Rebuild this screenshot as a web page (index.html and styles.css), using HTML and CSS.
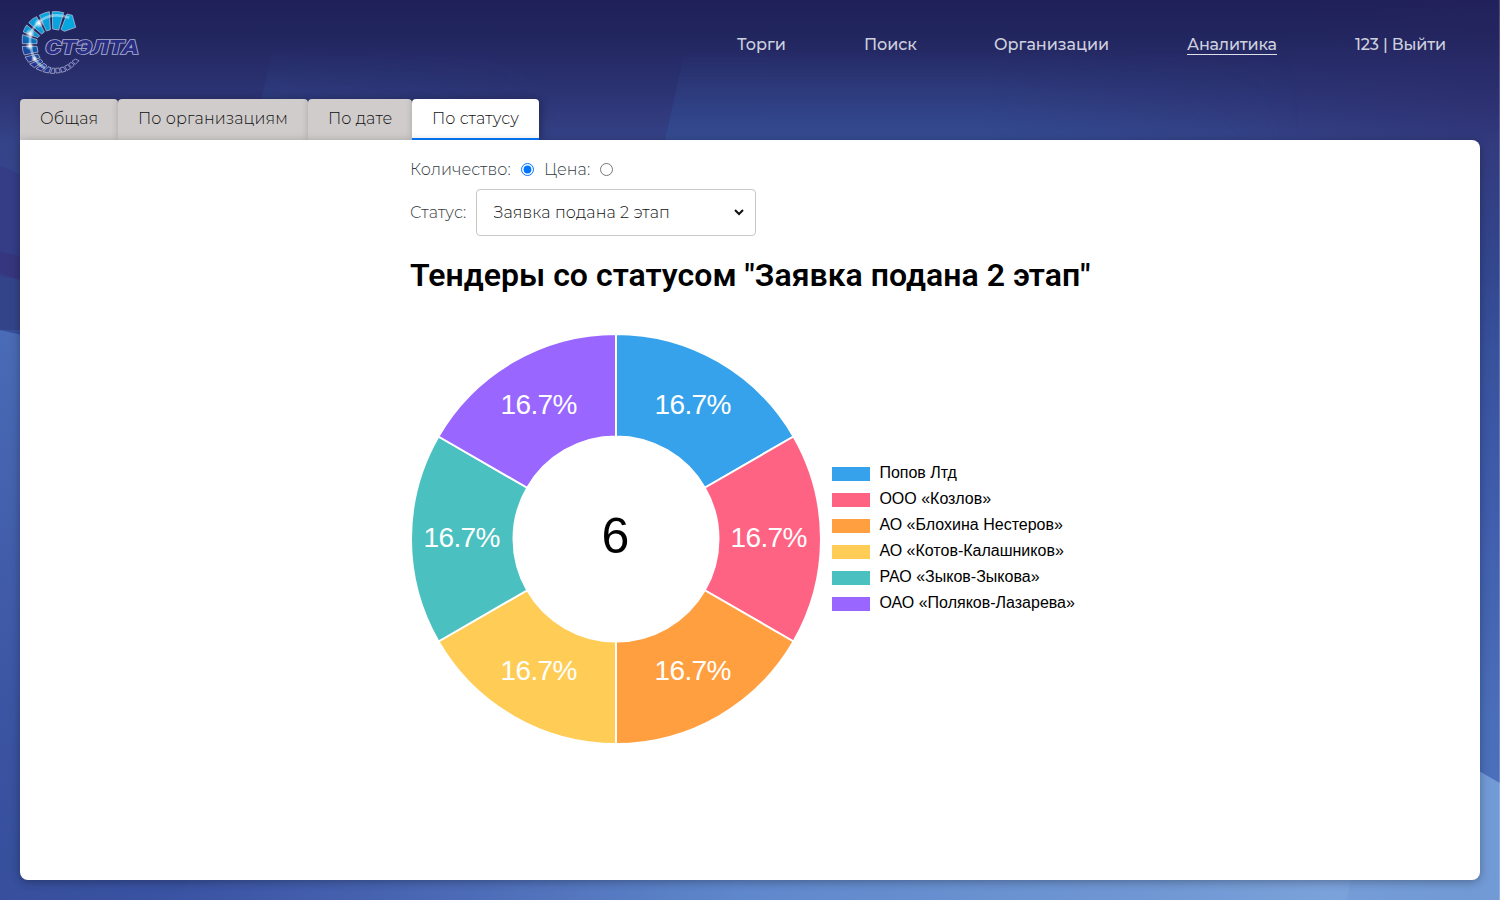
FILE: index.html
```html
<!DOCTYPE html>
<html lang="ru">
<head>
<meta charset="utf-8">
<title>Стэлта — Аналитика</title>
<link rel="stylesheet" href="styles.css">
</head>
<body>
<svg class="backdrop" viewBox="0 0 1500 900" preserveAspectRatio="none" aria-hidden="true">
  <defs>
    <linearGradient id="sky" x1="0" y1="0" x2="0" y2="1">
      <stop offset="0" stop-color="#1f2059"/><stop offset=".04" stop-color="#22265f"/><stop offset=".11" stop-color="#2d3576"/><stop offset=".16" stop-color="#354388"/><stop offset=".3" stop-color="#344b94"/><stop offset=".55" stop-color="#3f5cab"/><stop offset=".8" stop-color="#4b6eba"/><stop offset="1" stop-color="#4d71bd"/>
    </linearGradient>
    <linearGradient id="ray" x1="0" y1="0" x2="0" y2="1"><stop offset="0" stop-color="#3458a0" stop-opacity="0"/><stop offset="1" stop-color="#3458a0" stop-opacity=".45"/></linearGradient>
    <linearGradient id="rayFade" gradientUnits="userSpaceOnUse" x1="660" y1="0" x2="1300" y2="0"><stop offset="0" stop-color="#fff"/><stop offset=".5" stop-color="#fff"/><stop offset="1" stop-color="#000"/></linearGradient>
    <linearGradient id="rayFadeLeft" gradientUnits="userSpaceOnUse" x1="250" y1="0" x2="560" y2="0"><stop offset="0" stop-color="#fff"/><stop offset="1" stop-color="#000"/></linearGradient>
    <mask id="softRay"><rect width="1500" height="200" fill="url(#rayFade)"/></mask>
    <mask id="softRayLeft"><rect width="1500" height="200" fill="url(#rayFadeLeft)"/></mask>
    <linearGradient id="side" x1="0" y1="0" x2="0" y2="1"><stop offset="0" stop-color="#4a6bb6"/><stop offset=".75" stop-color="#3a52a0"/><stop offset="1" stop-color="#364f9b"/></linearGradient>
    <linearGradient id="floor" x1="0" y1="0" x2="1" y2="0"><stop offset="0" stop-color="#374f9c"/><stop offset=".12" stop-color="#3a53a2"/><stop offset=".3" stop-color="#4b69b5"/><stop offset=".5" stop-color="#5f87cb"/><stop offset=".8" stop-color="#7299d4"/><stop offset=".9" stop-color="#7ca2db"/><stop offset="1" stop-color="#739bd6"/></linearGradient>
    <radialGradient id="dusk" gradientUnits="userSpaceOnUse" cx="1500" cy="110" r="240"><stop offset="0" stop-color="#2b2362" stop-opacity=".3"/><stop offset="1" stop-color="#2b2362" stop-opacity="0"/></radialGradient>
  </defs>
  <rect width="1500" height="900" fill="url(#sky)"/>
  <path d="M273 48H700V140H252Z" fill="url(#ray)" opacity=".9" mask="url(#softRayLeft)"/>
  <path d="M685 50H1300V140H665Z" fill="url(#ray)" mask="url(#softRay)"/>
  <rect x="1200" width="300" height="360" fill="url(#dusk)"/>
  <path d="M0 166L20 174V330H0Z" fill="#343d86"/>
  <path d="M0 252L20 256V280L0 273Z" fill="#35367d"/>
  <path d="M0 276L20 280V330H0Z" fill="#344489"/>
  <path d="M0 330L30 337V900H0Z" fill="url(#side)"/>
  <rect y="870" width="1480" height="30" fill="url(#floor)"/>
  <path d="M1352 870H1480V900H1347Z" fill="#6f97d3" opacity=".5"/>
  <path d="M1470 766L1500 783V900H1470Z" fill="#729ad5"/>
  <path d="M1499 0h1v900h-1z" fill="#fff" opacity=".2"/>
</svg>

<div class="page">
  <header class="header">
    <a class="logo" href="#" aria-label="Стэлта">
      <svg width="140" height="84" viewBox="0 0 420 252">
        <defs>
          <linearGradient id="blade" gradientUnits="userSpaceOnUse" x1="160" y1="40" x2="60" y2="215"><stop offset="0" stop-color="#05a9e2"/><stop offset=".45" stop-color="#099bd6"/><stop offset=".65" stop-color="#0b5fae"/><stop offset=".9" stop-color="#27308e"/></linearGradient>
          <radialGradient id="spark"><stop offset="0" stop-color="#fff"/><stop offset="1" stop-color="#fff" stop-opacity="0"/></radialGradient>
        </defs>
        <g fill="url(#blade)" stroke="#bfc1d9" stroke-width="2.2" stroke-linejoin="round">
          <path d="M171 42L187 46L197 82L163 94L153 88Z"/>
          <path d="M127 35Q143 33 161 38L146 90L128 87Z"/>
          <path d="M88 46Q104 37 118 35L121 89L109 93Z"/>
          <path d="M56 68Q68 54 80 50L103 96L95 102Z"/>
          <path d="M40 96Q43 84 50 75L89 107L83 113Z"/>
          <path d="M38 104L81 119L81 131L37 131Q36 112 38 104Z"/>
          <path d="M37 139H81L84 156L43 165Q37 153 37 139Z"/>
          <path d="M45 171L84 162L90 173L56 187Z"/>
          <path d="M59 192L92 178L99 185L73 203Z"/>
          <path d="M78 206L102 190L111 197L94 213Z"/>
          <path d="M99 215L114 200L123 203L116 219Z"/>
        </g>
        <g fill="#272d78" stroke="#aeb0d0" stroke-width="2.3" stroke-linejoin="round">
          <path d="M121 220L127 204L134 205L134 220Z"/><path d="M138 219L137 205L147 204L151 218Z"/><path d="M155 217L151 203L160 201L168 213Z"/><path d="M171 211L164 199L173 194L182 205Z"/><path d="M185 203L176 192L183 187L193 195Z"/><path d="M196 193L186 184L196 177L207 182Z"/>
        </g>
        <path d="M178 53Q128 35 90 63Q52 94 62 140Q70 188 105 204" fill="none" stroke="#d9f5ff" stroke-width="8" opacity=".5"/>
        <circle cx="87" cy="70" r="15" fill="url(#spark)"/><circle cx="60" cy="101" r="15" fill="url(#spark)"/><circle cx="59" cy="138" r="13" fill="url(#spark)"/><circle cx="73" cy="176" r="10" fill="url(#spark)"/>
        <text class="logo-name" x="106" y="162" textLength="281" lengthAdjust="spacingAndGlyphs">СТЭЛТА</text>
      </svg>
    </a>
    <nav class="nav">
      <a class="nav-link n-trade" href="#">Торги</a>
      <a class="nav-link n-search" href="#">Поиск</a>
      <a class="nav-link n-orgs" href="#">Организации</a>
      <a class="nav-link n-stats current" href="#">Аналитика</a>
      <a class="nav-link n-exit" href="#">123 | Выйти</a>
    </nav>
  </header>

  <div class="tabs">
    <button class="tab t-all">Общая</button>
    <button class="tab t-orgs">По организациям</button>
    <button class="tab t-date">По дате</button>
    <button class="tab t-status active">По статусу</button>
  </div>

  <main class="panel">
    <div class="report">
      <div class="mode">
        <label class="l-count" for="count">Количество:</label><input id="count" type="radio" name="mode" checked>
        <label class="l-price" for="price">Цена:</label><input id="price" type="radio" name="mode">
      </div>
      <div class="status">
        <label class="l-status" for="status">Статус:</label>
        <div class="select-box"><select id="status" class="select"><option>Заявка подана 2 этап</option></select></div>
      </div>
      <h1 class="title">Тендеры со статусом "Заявка подана 2 этап"</h1>
      <div class="chart">
        <svg class="donut" width="412" height="412" viewBox="-206 -206 412 412">
          <g stroke="#fff" stroke-width="2" stroke-linejoin="bevel">
            <path fill="#36a2eb" d="M0-205A205 205 0 0 1 177.54-102.5L88.77-51.25A102.5 102.5 0 0 0 0-102.5Z"/>
            <path fill="#ff6384" d="M177.54-102.5A205 205 0 0 1 177.54 102.5L88.77 51.25A102.5 102.5 0 0 0 88.77-51.25Z"/>
            <path fill="#ff9f40" d="M177.54 102.5A205 205 0 0 1 0 205V102.5A102.5 102.5 0 0 0 88.77 51.25Z"/>
            <path fill="#ffcd56" d="M0 205A205 205 0 0 1-177.54 102.5L-88.77 51.25A102.5 102.5 0 0 0 0 102.5Z"/>
            <path fill="#4bc0c0" d="M-177.54 102.5A205 205 0 0 1-177.54-102.5L-88.77-51.25A102.5 102.5 0 0 0-88.77 51.25Z"/>
            <path fill="#9966ff" d="M-177.54-102.5A205 205 0 0 1 0-205V-102.5A102.5 102.5 0 0 0-88.77-51.25Z"/>
          </g>
          <g class="share">
            <text x="76.7" y="-125">16.7%</text><text x="152.7" y="8">16.7%</text><text x="76.7" y="141">16.7%</text>
            <text x="-77.3" y="141">16.7%</text><text x="-154.3" y="8">16.7%</text><text x="-77.3" y="-125">16.7%</text>
          </g>
          <text class="total" x="-.5" y="14">6</text>
        </svg>
        <ul class="legend">
          <li><i class="swatch blue"></i>Попов Лтд</li>
          <li><i class="swatch pink"></i>ООО «Козлов»</li>
          <li><i class="swatch orange"></i>АО «Блохина Нестеров»</li>
          <li><i class="swatch yellow"></i>АО «Котов-Калашников»</li>
          <li><i class="swatch teal"></i>РАО «Зыков-Зыкова»</li>
          <li><i class="swatch violet"></i>ОАО «Поляков-Лазарева»</li>
        </ul>
      </div>
    </div>
  </main>
</div>
</body>
</html>
```
FILE: styles.css
```css
* { box-sizing: border-box; }
body { margin: 0; height: 900px; overflow: hidden; background: #20225b; font-family: Montserrat, Inter, sans-serif; font-size: 16px; }
.backdrop { position: absolute; inset: 0; width: 100%; height: 100%; z-index: -1; }
.page { height: 900px; padding: 0 20px 20px; display: flex; flex-direction: column; }
.header { height: 99px; display: flex; justify-content: space-between; align-items: flex-start; }
.logo { margin-left: -10px; }
.logo svg { display: block; }
.logo-name { font: italic 900 60px Roboto, sans-serif; fill: #292e83; stroke: #aaadd0; stroke-width: 4.5px; paint-order: stroke; }
.nav { display: flex; gap: 78px; padding: 35px 33px 0 0; }
.nav-link { color: #cfd0de; font-weight: 500; line-height: 20px; height: 20px; text-decoration: none; white-space: nowrap; }
.n-trade { width: 49px; }
.n-search { width: 52px; letter-spacing: -.1px; }
.n-orgs { width: 115px; }
.n-stats { width: 90px; letter-spacing: -.2px; }
.n-exit { width: 92px; letter-spacing: -.15px; }
.current { border-bottom: 1px solid #dedfe9; }
.tabs { display: flex; height: 41px; }
.tab { height: 41px; border: 0; border-radius: 4px 4px 0 0; background: #d0cccb; color: #111; font: 300 16px/20px Montserrat, Inter, sans-serif; letter-spacing: .1px; padding: 0 0 2px 20px; text-align: left; white-space: nowrap; box-shadow: 2px 0 8px rgba(0, 0, 0, .3); }
.t-all { width: 98px; }
.t-orgs { width: 190px; }
.t-date { width: 104px; }
.t-status { width: 127px; }
.tab.active { background: #fff; border-bottom: 2px solid #007bff; padding-bottom: 0; }
.panel { position: relative; flex: 1; background: #fff; border-radius: 0 8px 8px 8px; box-shadow: 0 2px 10px rgba(0, 0, 0, .3); display: flex; justify-content: center; }
.report { width: 680px; padding-top: 19px; color: #343b42; font-weight: 300; letter-spacing: .08px; }
.mode { display: flex; align-items: center; height: 21px; }
.mode input { width: 13px; height: 13px; margin: 0 10px; accent-color: #0075ff; }
.l-count { width: 101px; white-space: nowrap; }
.l-price { width: 46px; white-space: nowrap; }
.status { display: flex; align-items: center; margin-top: 9px; height: 47px; }
.l-status { width: 66px; white-space: nowrap; }
.select-box { width: 280px; height: 47px; padding: 0 8px; border: 1px solid #c8c8c8; border-radius: 4px; background: #fff; }
.select { display: block; width: 262px; height: 45px; border: 0; background: #fff; color: #111; padding: 0 4.5px; font: 300 16px Montserrat, Inter, sans-serif; letter-spacing: .12px; }
.title { margin: 20px 0 0; height: 38px; line-height: 38px; font-family: Roboto, sans-serif; font-weight: 600; font-size: 32px; letter-spacing: .03px; color: #000; white-space: nowrap; }
.chart { display: flex; align-items: center; margin-top: 39px; }
.donut { display: block; flex: none; }
.share { font: 28px "Liberation Sans", Arial, sans-serif; letter-spacing: -.6px; fill: #fff; text-anchor: middle; }
.total { font: 50px "Liberation Sans", Arial, sans-serif; letter-spacing: 0; fill: #000; text-anchor: middle; }
.legend { list-style: none; margin: -2px 0 0 10.4px; padding: 0; font: 400 16px/26px "Liberation Sans", Arial, sans-serif; letter-spacing: 0; color: #000; }
.legend li { display: flex; height: 26px; white-space: nowrap; }
.swatch { width: 38px; height: 14px; margin: 7px 9px 0 0; }
.blue { background: #36a2eb; }
.pink { background: #ff6384; }
.orange { background: #ff9f40; }
.yellow { background: #ffcd56; }
.teal { background: #4bc0c0; }
.violet { background: #9966ff; }
```
